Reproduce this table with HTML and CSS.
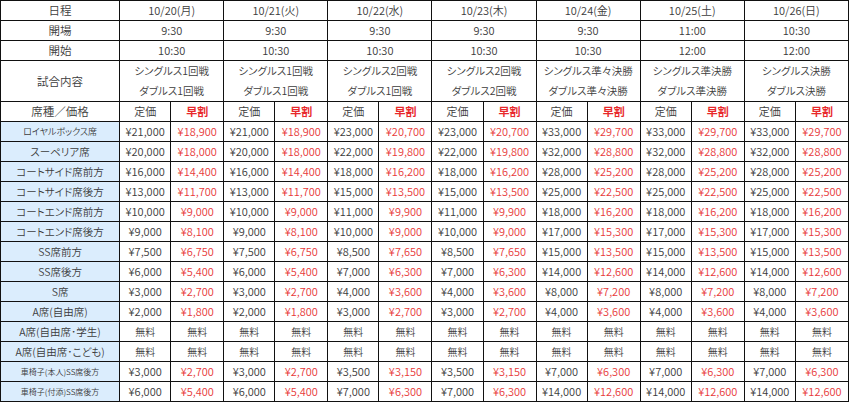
FILE: index.html
```html
<!DOCTYPE html>
<html lang="ja">
<head>
<meta charset="utf-8">
<title>料金表</title>
<link rel="stylesheet" href="styles.css">
</head>
<body>
<table class="price">
<colgroup>
<col class="c-label">
<col class="c-a"><col class="c-b"><col class="c-a"><col class="c-b"><col class="c-a"><col class="c-b"><col class="c-a"><col class="c-b"><col class="c-a"><col class="c-b"><col class="c-a"><col class="c-b"><col class="c-a"><col class="c-b">
</colgroup>
<tbody>
<tr><td class="hd">日程</td><td colspan="2">10/20(月)</td><td colspan="2">10/21(火)</td><td colspan="2">10/22(水)</td><td colspan="2">10/23(木)</td><td colspan="2">10/24(金)</td><td colspan="2">10/25(土)</td><td colspan="2">10/26(日)</td></tr>
<tr><td class="hd">開場</td><td colspan="2">9:30</td><td colspan="2">9:30</td><td colspan="2">9:30</td><td colspan="2">9:30</td><td colspan="2">9:30</td><td colspan="2">11:00</td><td colspan="2">10:30</td></tr>
<tr><td class="hd">開始</td><td colspan="2">10:30</td><td colspan="2">10:30</td><td colspan="2">10:30</td><td colspan="2">10:30</td><td colspan="2">10:30</td><td colspan="2">12:00</td><td colspan="2">12:00</td></tr>
<tr class="match"><td class="hd">試合内容</td><td colspan="2">シングルス1回戦<br>ダブルス1回戦</td><td colspan="2">シングルス1回戦<br>ダブルス1回戦</td><td colspan="2">シングルス2回戦<br>ダブルス1回戦</td><td colspan="2">シングルス2回戦<br>ダブルス2回戦</td><td colspan="2">シングルス準々決勝<br>ダブルス準々決勝</td><td colspan="2">シングルス準決勝<br>ダブルス準決勝</td><td colspan="2">シングルス決勝<br>ダブルス決勝</td></tr>
<tr><td class="hd">席種／価格</td><td>定価</td><td class="hr">早割</td><td>定価</td><td class="hr">早割</td><td>定価</td><td class="hr">早割</td><td>定価</td><td class="hr">早割</td><td>定価</td><td class="hr">早割</td><td>定価</td><td class="hr">早割</td><td>定価</td><td class="hr">早割</td></tr>
<tr><td class="seat xs">ロイヤルボックス席</td><td>¥21,000</td><td class="r">¥18,900</td><td>¥21,000</td><td class="r">¥18,900</td><td>¥23,000</td><td class="r">¥20,700</td><td>¥23,000</td><td class="r">¥20,700</td><td>¥33,000</td><td class="r">¥29,700</td><td>¥33,000</td><td class="r">¥29,700</td><td>¥33,000</td><td class="r">¥29,700</td></tr>
<tr><td class="seat">スーペリア席</td><td>¥20,000</td><td class="r">¥18,000</td><td>¥20,000</td><td class="r">¥18,000</td><td>¥22,000</td><td class="r">¥19,800</td><td>¥22,000</td><td class="r">¥19,800</td><td>¥32,000</td><td class="r">¥28,800</td><td>¥32,000</td><td class="r">¥28,800</td><td>¥32,000</td><td class="r">¥28,800</td></tr>
<tr><td class="seat">コートサイド席前方</td><td>¥16,000</td><td class="r">¥14,400</td><td>¥16,000</td><td class="r">¥14,400</td><td>¥18,000</td><td class="r">¥16,200</td><td>¥18,000</td><td class="r">¥16,200</td><td>¥28,000</td><td class="r">¥25,200</td><td>¥28,000</td><td class="r">¥25,200</td><td>¥28,000</td><td class="r">¥25,200</td></tr>
<tr><td class="seat">コートサイド席後方</td><td>¥13,000</td><td class="r">¥11,700</td><td>¥13,000</td><td class="r">¥11,700</td><td>¥15,000</td><td class="r">¥13,500</td><td>¥15,000</td><td class="r">¥13,500</td><td>¥25,000</td><td class="r">¥22,500</td><td>¥25,000</td><td class="r">¥22,500</td><td>¥25,000</td><td class="r">¥22,500</td></tr>
<tr><td class="seat">コートエンド席前方</td><td>¥10,000</td><td class="r">¥9,000</td><td>¥10,000</td><td class="r">¥9,000</td><td>¥11,000</td><td class="r">¥9,900</td><td>¥11,000</td><td class="r">¥9,900</td><td>¥18,000</td><td class="r">¥16,200</td><td>¥18,000</td><td class="r">¥16,200</td><td>¥18,000</td><td class="r">¥16,200</td></tr>
<tr><td class="seat">コートエンド席後方</td><td>¥9,000</td><td class="r">¥8,100</td><td>¥9,000</td><td class="r">¥8,100</td><td>¥10,000</td><td class="r">¥9,000</td><td>¥10,000</td><td class="r">¥9,000</td><td>¥17,000</td><td class="r">¥15,300</td><td>¥17,000</td><td class="r">¥15,300</td><td>¥17,000</td><td class="r">¥15,300</td></tr>
<tr><td class="seat">SS席前方</td><td>¥7,500</td><td class="r">¥6,750</td><td>¥7,500</td><td class="r">¥6,750</td><td>¥8,500</td><td class="r">¥7,650</td><td>¥8,500</td><td class="r">¥7,650</td><td>¥15,000</td><td class="r">¥13,500</td><td>¥15,000</td><td class="r">¥13,500</td><td>¥15,000</td><td class="r">¥13,500</td></tr>
<tr><td class="seat">SS席後方</td><td>¥6,000</td><td class="r">¥5,400</td><td>¥6,000</td><td class="r">¥5,400</td><td>¥7,000</td><td class="r">¥6,300</td><td>¥7,000</td><td class="r">¥6,300</td><td>¥14,000</td><td class="r">¥12,600</td><td>¥14,000</td><td class="r">¥12,600</td><td>¥14,000</td><td class="r">¥12,600</td></tr>
<tr><td class="seat">S席</td><td>¥3,000</td><td class="r">¥2,700</td><td>¥3,000</td><td class="r">¥2,700</td><td>¥4,000</td><td class="r">¥3,600</td><td>¥4,000</td><td class="r">¥3,600</td><td>¥8,000</td><td class="r">¥7,200</td><td>¥8,000</td><td class="r">¥7,200</td><td>¥8,000</td><td class="r">¥7,200</td></tr>
<tr><td class="seat">A席(自由席)</td><td>¥2,000</td><td class="r">¥1,800</td><td>¥2,000</td><td class="r">¥1,800</td><td>¥3,000</td><td class="r">¥2,700</td><td>¥3,000</td><td class="r">¥2,700</td><td>¥4,000</td><td class="r">¥3,600</td><td>¥4,000</td><td class="r">¥3,600</td><td>¥4,000</td><td class="r">¥3,600</td></tr>
<tr class="free"><td class="seat">A席(自由席･学生)</td><td>無料</td><td>無料</td><td>無料</td><td>無料</td><td>無料</td><td>無料</td><td>無料</td><td>無料</td><td>無料</td><td>無料</td><td>無料</td><td>無料</td><td>無料</td><td>無料</td></tr>
<tr class="free"><td class="seat">A席(自由席･こども)</td><td>無料</td><td>無料</td><td>無料</td><td>無料</td><td>無料</td><td>無料</td><td>無料</td><td>無料</td><td>無料</td><td>無料</td><td>無料</td><td>無料</td><td>無料</td><td>無料</td></tr>
<tr><td class="seat xxs">車椅子(本人)SS席後方</td><td>¥3,000</td><td class="r">¥2,700</td><td>¥3,000</td><td class="r">¥2,700</td><td>¥3,500</td><td class="r">¥3,150</td><td>¥3,500</td><td class="r">¥3,150</td><td>¥7,000</td><td class="r">¥6,300</td><td>¥7,000</td><td class="r">¥6,300</td><td>¥7,000</td><td class="r">¥6,300</td></tr>
<tr><td class="seat xxs">車椅子(付添)SS席後方</td><td>¥6,000</td><td class="r">¥5,400</td><td>¥6,000</td><td class="r">¥5,400</td><td>¥7,000</td><td class="r">¥6,300</td><td>¥7,000</td><td class="r">¥6,300</td><td>¥14,000</td><td class="r">¥12,600</td><td>¥14,000</td><td class="r">¥12,600</td><td>¥14,000</td><td class="r">¥12,600</td></tr>
</tbody>
</table>
</body>
</html>
```
FILE: styles.css
```css
body {
  margin: 0;
  background: #ffffff;
}
.price {
  border-collapse: collapse;
  table-layout: fixed;
  width: 849px;
  font-family: "Noto Sans CJK JP", sans-serif;
  font-size: 11px;
  font-weight: 350;
  font-feature-settings: "palt";
  color: #3c3c3c;
}
.c-label { width: 119px; }
.c-a { width: 51px; }
.c-b { width: 53px; }
.price td {
  border: 1px solid #111;
  height: 19px;
  padding: 0;
  line-height: 19px;
  text-align: center;
  white-space: nowrap;
  overflow: hidden;
}
.price td.hd {
  font-size: 11.5px;
}
.price .match td {
  height: 39px;
  line-height: 20px;
  font-size: 10.5px;
}
.price .match td.hd {
  font-size: 11.5px;
}
.price td.r {
  color: #e83a3a;
}
.price td.hr {
  color: #e8282b;
  font-weight: bold;
}
.price td.seat {
  background: #dbedfd;
  font-size: 10.5px;
}
.price td.xs {
  font-size: 9px;
}
.price td.xxs {
  font-size: 8px;
}
.price .free td:not(.seat) {
  font-size: 10px;
}
```
